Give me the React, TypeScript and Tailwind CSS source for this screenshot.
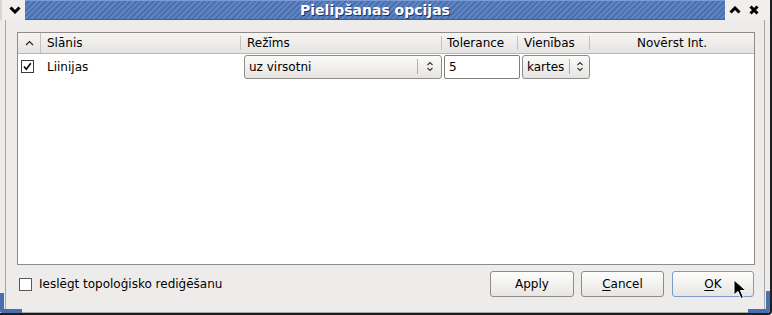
import React from 'react';

function UpDown({ className = '' }: { className?: string }) {
  return (
    <svg width="8" height="11" viewBox="0 0 8 11" className={className}>
      <polyline points="1.5,4 4,1.5 6.5,4" fill="none" stroke="#333" strokeWidth="1.1" />
      <polyline points="1.5,7 4,9.5 6.5,7" fill="none" stroke="#333" strokeWidth="1.1" />
    </svg>
  );
}

function Check() {
  return (
    <svg width="13" height="13" viewBox="0 0 13 13">
      <rect x="0.5" y="0.5" width="12" height="12" fill="#fff" stroke="#3d3b39" />
      <polyline points="3,6.5 5.3,9.3 9.8,3.2" fill="none" stroke="#000" strokeWidth="1.6" />
    </svg>
  );
}

function Combo({ label, w, arrowW }: { label: string; w: string; arrowW: string }) {
  return (
    <div className={`${w} h-[24px] flex items-center rounded-[3px] border border-[#8e8c89] bg-gradient-to-b from-[#fbfbfa] to-[#e6e5e3]`}>
      <span className="flex-1 pl-[4px] text-[12px] text-black truncate">{label}</span>
      <div className={`${arrowW} h-[15px] border-l border-[#b0aeab] flex items-center justify-center`}>
        <UpDown />
      </div>
    </div>
  );
}

function Btn({ children, w, def = false }: { children: React.ReactNode; w: string; def?: boolean }) {
  return (
    <button
      className={`${w} h-[26px] rounded-[3px] border text-[12px] text-black bg-gradient-to-b from-[#fdfdfc] to-[#e7e6e4] ${
        def ? 'border-[#7b9dcc]' : 'border-[#8e8c89]'
      }`}
    >
      {children}
    </button>
  );
}

export default function App() {
  return (
    <div className="relative w-[772px] h-[315px] bg-[#edeceb] font-['DejaVu_Sans',sans-serif] overflow-hidden flex flex-col border-r-[2px] border-b-[2px] border-[#1e1e1e] rounded-br-[4px]">
      {/* Title bar */}
      <div className="flex h-[20px] shrink-0">
        <div className="w-[25px] flex items-center justify-center pl-[3px] bg-[#f0efee] border-l-2 border-[#d8d6d3]">
          <svg width="12" height="8" viewBox="0 0 12 8">
            <polyline points="1.5,1.5 6,6 10.5,1.5" fill="none" stroke="#000" strokeWidth="3" />
          </svg>
        </div>
        <div className="flex-1 flex items-center justify-center bg-[repeating-linear-gradient(135deg,#5f84c3_0px,#5f84c3_2px,#4b70b0_2px,#4b70b0_4px)] border-t border-[#7b9bd2] border-b border-b-[#3d5d98]">
          <span className="text-[14px] font-bold text-white leading-none [text-shadow:1px_1px_0_#1f3561]">Pielipšanas opcijas</span>
        </div>
        <div className="w-[45px] flex items-center bg-[#f0efee]">
          <div className="w-[19px] flex justify-center">
            <svg width="12" height="8" viewBox="0 0 12 8">
              <polyline points="1.5,6.5 6,2 10.5,6.5" fill="none" stroke="#000" strokeWidth="3" />
            </svg>
          </div>
          <div className="w-[19px] flex justify-center">
            <svg width="10" height="10" viewBox="0 0 10 10">
              <path d="M1.5 1.5 L8.5 8.5 M8.5 1.5 L1.5 8.5" stroke="#000" strokeWidth="3" />
            </svg>
          </div>
        </div>
      </div>

      {/* Body */}
      <div className="flex-1 flex flex-col mx-[5px] border-l border-r border-b border-[#a9a7a4] pl-[11px] pr-[9px] pt-[12px]">
        {/* Table */}
        <div className="h-[233px] border border-[#8e8c89] bg-white flex flex-col">
          <div className="h-[21px] flex items-center bg-gradient-to-b from-[#f6f5f4] to-[#e5e4e2] border-b border-[#b9b7b4] text-[12px] text-black">
            <div className="w-[23px] h-full flex items-center justify-center border-r border-[#c4c2bf]">
              <svg width="9" height="6" viewBox="0 0 9 6">
                <polyline points="1,5 4.5,1.5 8,5" fill="none" stroke="#222" strokeWidth="1.2" />
              </svg>
            </div>
            <div className="w-[200px] pl-[6px] h-[14px] flex items-center border-r border-[#c4c2bf]">Slānis</div>
            <div className="w-[201px] pl-[6px] h-[14px] flex items-center border-r border-[#c4c2bf]">Režīms</div>
            <div className="w-[76px] pl-[5px] h-[14px] flex items-center border-r border-[#c4c2bf]">Tolerance</div>
            <div className="w-[72px] pl-[6px] h-[14px] flex items-center border-r border-[#c4c2bf]">Vienības</div>
            <div className="flex-1 text-center">Novērst Int.</div>
          </div>
          <div className="h-[25px] flex items-center text-[12px] text-black">
            <div className="w-[23px] flex pl-[3px]">
              <Check />
            </div>
            <div className="w-[200px] pl-[6px]">Liinijas</div>
            <div className="ml-[3px]">
              <Combo label="uz virsotni" w="w-[198px]" arrowW="w-[24px]" />
            </div>
            <div className="ml-[2px] w-[76px] h-[24px] border border-[#7f7d7a] rounded-[2px] bg-white flex items-center pl-[4px]">5</div>
            <div className="ml-[2px]">
              <Combo label="kartes" w="w-[68px]" arrowW="w-[20px]" />
            </div>
          </div>
        </div>

        {/* Bottom row */}
        <div className="flex items-center h-[44px] pb-[6px]">
          <div className="flex items-center gap-[7px] ml-[2px]">
            <svg width="13" height="13" viewBox="0 0 13 13">
              <rect x="0.5" y="0.5" width="12" height="12" fill="#fff" stroke="#5b5956" />
            </svg>
            <span className="text-[12px] text-black">Ieslēgt topoloģisko rediģēšanu</span>
          </div>
          <div className="ml-auto mr-[1px] flex">
            <Btn w="w-[84px]">Apply</Btn>
            <div className="ml-[7px]">
              <Btn w="w-[83px]">
                <span className="underline underline-offset-2">C</span>ancel
              </Btn>
            </div>
            <div className="ml-[8px]">
              <Btn w="w-[82px]" def>
                <span className="underline underline-offset-2">O</span>K
              </Btn>
            </div>
          </div>
        </div>
      </div>

      {/* Resize corners */}
      <div className="absolute left-0 bottom-0 w-[22px] h-[20px] border-l-[4px] border-b-[4px] border-[#4a6eb0] rounded-bl-[3px]" />
      <div className="absolute right-0 bottom-0 w-[22px] h-[22px] border-r-[4px] border-b-[4px] border-[#4a6eb0] rounded-br-[3px]" />

      {/* Cursor */}
      <svg className="absolute left-[733px] top-[279px]" width="18" height="22" viewBox="0 0 18 22">
        <path d="M1 1 L1 16 L5 12.5 L8 19.5 L10.5 18.5 L7.5 11.5 L13 11.5 Z" fill="#000" stroke="#fff" strokeWidth="1" />
      </svg>
    </div>
  );
}
